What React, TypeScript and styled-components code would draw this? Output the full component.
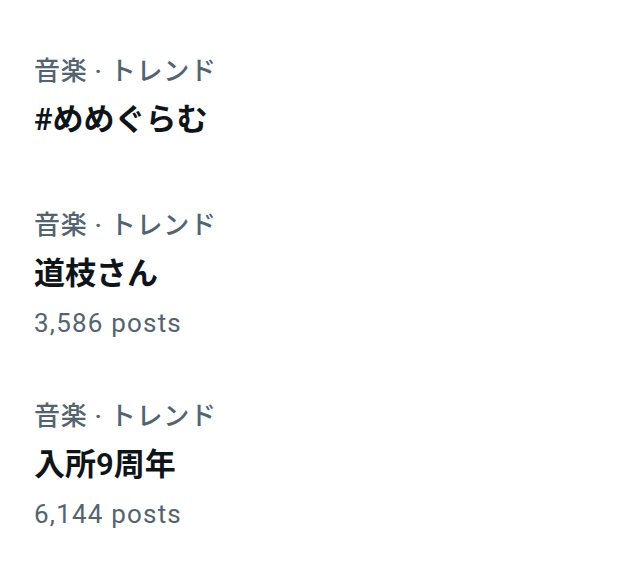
import React from "react";
import styled, { createGlobalStyle } from "styled-components";

const GlobalStyle = createGlobalStyle`
  html, body {
    margin: 0;
    padding: 0;
    background: #ffffff;
  }
  body {
    font-family: Roboto, "Noto Sans CJK JP", sans-serif;
    -webkit-font-smoothing: antialiased;
  }
`;

const List = styled.div`
  display: flex;
  flex-direction: column;
  padding: 25px 0 0 0;
  width: 640px;
  min-height: 567px;
  box-sizing: border-box;
  background: #ffffff;
`;

const Item = styled.div<{ $extra: number }>`
  display: flex;
  flex-direction: column;
  gap: 13px;
  padding: 30px 34px ${(p) => 31 + p.$extra}px 34px;
`;

const Label = styled.div`
  font-size: 26px;
  line-height: 32px;
  color: #536471;
  font-weight: 500;
  letter-spacing: 0.7px;
  white-space: nowrap;
`;

const Title = styled.div`
  font-size: 31px;
  line-height: 40px;
  color: #0f1419;
  font-weight: 600;
  white-space: nowrap;
`;

const Posts = styled.div`
  font-size: 26px;
  line-height: 32px;
  color: #536471;
  font-weight: 400;
  letter-spacing: 1.2px;
  white-space: nowrap;
`;

type Trend = { label: string; title: string; posts?: string };

const trends: Trend[] = [
  { label: "音楽 · トレンド", title: "#めめぐらむ" },
  { label: "音楽 · トレンド", title: "道枝さん", posts: "3,586 posts" },
  { label: "音楽 · トレンド", title: "入所9周年", posts: "6,144 posts" },
];

export default function App() {
  return (
    <>
      <GlobalStyle />
      <List>
        {trends.map((t, i) => (
          <Item key={i} $extra={t.posts ? 0 : 8}>
            <Label>{t.label}</Label>
            <Title>{t.title}</Title>
            {t.posts && <Posts>{t.posts}</Posts>}
          </Item>
        ))}
      </List>
    </>
  );
}
